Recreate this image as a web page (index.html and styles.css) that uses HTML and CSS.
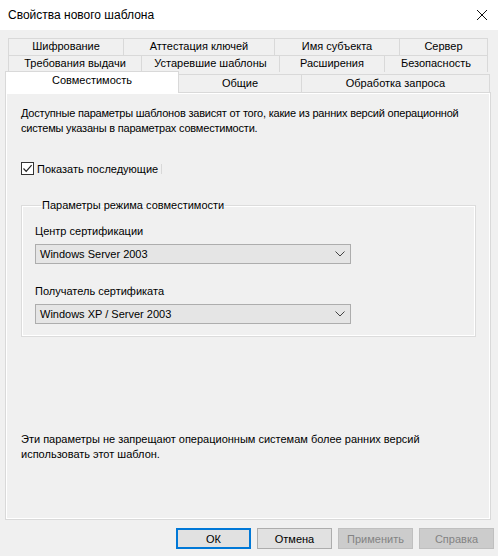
FILE: index.html
```html
<!DOCTYPE html>
<html lang="ru">
<head>
    <meta charset="UTF-8">
    <title>Свойства нового шаблона</title>
    <link rel="stylesheet" href="styles.css">
</head>
<body>
    <div class="titlebar">
        <span class="title">Свойства нового шаблона</span>
        <span class="close">
            <svg width="12" height="12" viewBox="0 0 12 12"><path d="M1 1 L11 11 M11 1 L1 11" stroke="#111" stroke-width="1"/></svg>
        </span>
    </div>
    <div class="dialog">
        <div class="tabs">
            <div class="tab-row row1">
                <div class="tab w116">Шифрование</div>
                <div class="tab w151">Аттестация ключей</div>
                <div class="tab w125">Имя субъекта</div>
                <div class="tab w88">Сервер</div>
            </div>
            <div class="tab-row row2">
                <div class="tab w134">Требования выдачи</div>
                <div class="tab w138">Устаревшие шаблоны</div>
                <div class="tab w105">Расширения</div>
                <div class="tab w103">Безопасность</div>
            </div>
            <div class="tab-row row3">
                <div class="tab active w174">Совместимость</div>
                <div class="tab w123">Общие</div>
                <div class="tab w188">Обработка запроса</div>
            </div>
        </div>
        <div class="panel">
            <p class="intro">Доступные параметры шаблонов зависят от того, какие из ранних версий операционной системы указаны в параметрах совместимости.</p>
            <label class="check">
                <span class="box">
                    <svg width="11" height="11" viewBox="0 0 11 11"><path d="M1.5 5.5 L4.2 8.3 L9.6 2.2" fill="none" stroke="#222" stroke-width="1.2"/></svg>
                </span>
                <span>Показать последующие</span>
                <span class="focus"></span>
            </label>
            <fieldset class="group">
                <legend>Параметры режима совместимости</legend>
                <div class="field-label">Центр сертификации</div>
                <div class="combo">
                    <span>Windows Server 2003</span>
                    <svg width="10" height="6" viewBox="0 0 10 6"><path d="M0.5 0.5 L5 5 L9.5 0.5" fill="none" stroke="#444" stroke-width="1"/></svg>
                </div>
                <div class="field-label">Получатель сертификата</div>
                <div class="combo">
                    <span>Windows XP / Server 2003</span>
                    <svg width="10" height="6" viewBox="0 0 10 6"><path d="M0.5 0.5 L5 5 L9.5 0.5" fill="none" stroke="#444" stroke-width="1"/></svg>
                </div>
            </fieldset>
            <p class="note">Эти параметры не запрещают операционным системам более ранних версий использовать этот шаблон.</p>
        </div>
        <div class="buttons">
            <button class="btn default">ОК</button>
            <button class="btn">Отмена</button>
            <button class="btn" disabled>Применить</button>
            <button class="btn" disabled>Справка</button>
        </div>
    </div>
</body>
</html>
```
FILE: styles.css
```css
html, body {
    margin: 0;
    padding: 0;
}
body {
    width: 498px;
    height: 556px;
    background: #f0f0f0;
    font-family: 'Liberation Sans', Arial, sans-serif;
    font-size: 11px;
    color: #000;
    overflow: hidden;
}
.titlebar {
    height: 30px;
    background: #fff;
    display: flex;
    align-items: center;
    justify-content: space-between;
    padding: 0 10px 0 8px;
}
.title {
    font-size: 12px;
    color: #000;
}
.close {
    display: flex;
}
.dialog {
    padding: 8px 7px 0 5px;
}
.tabs {
    display: flex;
    flex-direction: column;
}
.tab-row {
    display: flex;
}
.row1, .row2 {
    margin-left: 3px;
    margin-right: 2px;
}
.tab {
    box-sizing: border-box;
    height: 17px;
    line-height: 15px;
    text-align: center;
    border: 1px solid #d9d9d9;
    border-bottom: none;
    margin-left: -1px;
    background: #f0f0f0;
    white-space: nowrap;
}
.tab:first-child {
    margin-left: 0;
}
.row3 {
    height: 21px;
    align-items: flex-end;
    position: relative;
    z-index: 1;
    margin-bottom: -1px;
}
.row3 .tab {
    height: 19px;
    line-height: 17px;
    border-bottom: 1px solid #d9d9d9;
}
.row3 .tab.active {
    height: 22px;
    line-height: 16px;
    background: #fff;
    border-bottom: none;
    padding-bottom: 3px;
}
.w116 { width: 116px; }
.w151 { width: 152px; }
.w125 { width: 126px; }
.w88 { width: 89px; }
.w134 { width: 134px; }
.w138 { width: 139px; }
.w105 { width: 106px; }
.w103 { width: 104px; }
.w174 { width: 174px; }
.w123 { width: 124px; }
.w188 { width: 189px; }
.panel {
    box-sizing: border-box;
    width: 486px;
    height: 428px;
    border: 1px solid #d9d9d9;
    box-shadow: inset 0 0 0 1px #fff;
    background: #f0f0f0;
    padding: 13px 14px 0 15px;
    display: flex;
    flex-direction: column;
}
.intro {
    margin: 0 -10px 0 0;
    line-height: 15px;
    letter-spacing: -0.2px;
}
.check {
    display: flex;
    align-items: center;
    margin-top: 25px;
    height: 15px;
}
.box {
    box-sizing: border-box;
    width: 13px;
    height: 13px;
    border: 1px solid #333;
    background: #fff;
    display: flex;
    align-items: center;
    justify-content: center;
    margin-right: 3px;
}
.focus {
    width: 1px;
    height: 10px;
    background: #d8d8d8;
    margin-left: 3px;
}
.group {
    margin: 22px 0 0 0;
    padding: 12px 0 12px 13px;
    border: 1px solid #dcdcdc;
    box-shadow: inset 0 0 0 1px #fff;
    width: 455px;
    box-sizing: border-box;
}
.group legend {
    padding: 0 1px;
    margin-left: 6px;
    line-height: 14px;
}
.field-label {
    line-height: 15px;
    margin-bottom: 5px;
}
.combo {
    box-sizing: border-box;
    width: 316px;
    height: 20px;
    border: 1px solid #adadad;
    background: #e5e5e5;
    display: flex;
    align-items: center;
    justify-content: space-between;
    padding: 0 5px 0 4px;
    margin-bottom: 20px;
}
.combo:last-child {
    margin-bottom: 0;
}
.note {
    margin: 95px 0 0 0;
    line-height: 15px;
}
.buttons {
    display: flex;
    justify-content: flex-end;
    gap: 6px;
    margin-top: 8px;
    margin-right: -3px;
}
.btn {
    box-sizing: border-box;
    width: 75px;
    height: 21px;
    border: 1px solid #adadad;
    background: #e1e1e1;
    font-family: 'Liberation Sans', Arial, sans-serif;
    font-size: 11px;
    color: #000;
    padding: 0;
}
.btn.default {
    border: 2px solid #0078d7;
}
.btn:disabled {
    background: #cccccc;
    border-color: #bfbfbf;
    color: #838383;
}
```
